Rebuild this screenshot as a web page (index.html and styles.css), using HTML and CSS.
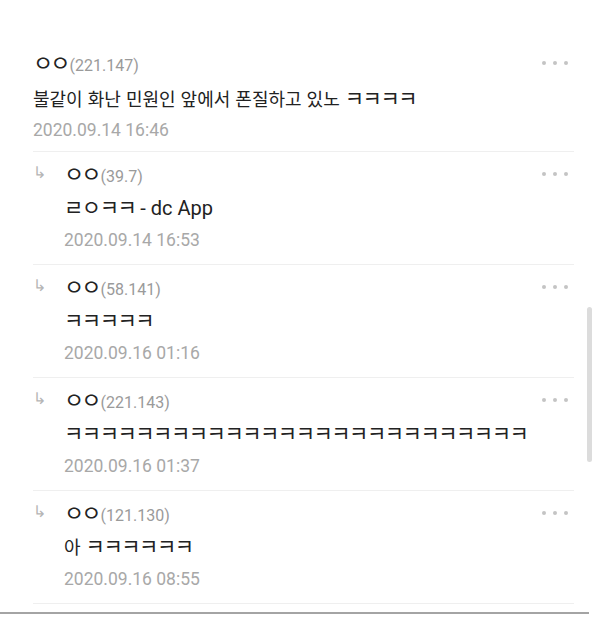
FILE: index.html
```html
<!DOCTYPE html>
<html lang="ko">
<head>
    <meta charset="UTF-8">
    <meta name="viewport" content="width=device-width, initial-scale=1.0">
    <title>댓글</title>
    <link rel="stylesheet" href="styles.css">
</head>
<body>

    <div class="comments">
        <ul class="comment-list">
            <li class="comment">
                <div class="comment-head">
                    <span class="nick">ㅇㅇ<span class="ip">(221.147)</span></span>
                    <span class="more"><i></i><i></i><i></i></span>
                </div>
                <p class="text">불같이 화난 민원인 앞에서 폰질하고 있노 <span class="jamo">ㅋㅋㅋㅋ</span></p>
                <span class="date">2020.09.14 16:46</span>
            </li>

            <li class="comment reply">
                <span class="arrow">↳</span>
                <div class="reply-body">
                    <div class="comment-head">
                        <span class="nick">ㅇㅇ<span class="ip">(39.7)</span></span>
                        <span class="more"><i></i><i></i><i></i></span>
                    </div>
                    <p class="text"><span class="jamo">ㄹㅇㅋㅋ</span> <span class="latin">- dc App</span></p>
                    <span class="date">2020.09.14 16:53</span>
                </div>
            </li>

            <li class="comment reply">
                <span class="arrow">↳</span>
                <div class="reply-body">
                    <div class="comment-head">
                        <span class="nick">ㅇㅇ<span class="ip">(58.141)</span></span>
                        <span class="more"><i></i><i></i><i></i></span>
                    </div>
                    <p class="text"><span class="jamo">ㅋㅋㅋㅋㅋ</span></p>
                    <span class="date">2020.09.16 01:16</span>
                </div>
            </li>

            <li class="comment reply">
                <span class="arrow">↳</span>
                <div class="reply-body">
                    <div class="comment-head">
                        <span class="nick">ㅇㅇ<span class="ip">(221.143)</span></span>
                        <span class="more"><i></i><i></i><i></i></span>
                    </div>
                    <p class="text"><span class="jamo">ㅋㅋㅋㅋㅋㅋㅋㅋㅋㅋㅋㅋㅋㅋㅋㅋㅋㅋㅋㅋㅋㅋㅋㅋㅋㅋ</span></p>
                    <span class="date">2020.09.16 01:37</span>
                </div>
            </li>

            <li class="comment reply">
                <span class="arrow">↳</span>
                <div class="reply-body">
                    <div class="comment-head">
                        <span class="nick">ㅇㅇ<span class="ip">(121.130)</span></span>
                        <span class="more"><i></i><i></i><i></i></span>
                    </div>
                    <p class="text">아 <span class="jamo">ㅋㅋㅋㅋㅋㅋ</span></p>
                    <span class="date">2020.09.16 08:55</span>
                </div>
            </li>
        </ul>

        <!-- scroll indicator -->
        <div class="scrollbar"></div>
    </div>

</body>
</html>
```

FILE: styles.css
```css
/* Global Styles */
body {
    margin: 0;
    padding: 0;
    background-color: #fff;
    font-family: Roboto, "Noto Sans CJK KR", sans-serif;
    color: #222;
}

.comments {
    position: relative;
    width: 589px;
    padding: 39px 0 8px;
    border-bottom: 2px solid #a4a4a4;
}

.comment-list {
    list-style: none;
    margin: 0 15px 0 33px;
    padding: 0;
}

/* Comment Row */
.comment {
    display: flex;
    flex-direction: column;
    padding: 10px 0 6px;
    border-bottom: 1px solid #efefef;
}

.comment:first-child .text {
    margin-top: 2px;
}

.comment.reply {
    flex-direction: row;
    padding: 8px 0 8px;
}

.reply .date {
    line-height: 32px;
}

.reply-body {
    flex: 1;
    display: flex;
    flex-direction: column;
}

.arrow {
    width: 31px;
    height: 26px;
    line-height: 26px;
    font-size: 16px;
    color: #b5b5b5;
}

.comment-head {
    display: flex;
    justify-content: space-between;
    align-items: center;
    height: 28px;
}

.nick {
    font-family: "Noto Sans CJK KR", sans-serif;
    font-size: 22px;
    font-weight: 400;
    letter-spacing: -3px;
    line-height: 28px;
    color: #222;
}

.ip {
    margin-left: 2px;
    font-family: Roboto, sans-serif;
    font-size: 16px;
    font-weight: 400;
    letter-spacing: 0;
    color: #9a9a9a;
}

.more {
    display: flex;
    gap: 7px;
    margin-right: 6px;
}

.more i {
    width: 4px;
    height: 4px;
    border-radius: 50%;
    background-color: #c4c4c4;
}

.text {
    margin: 0;
    height: 36px;
    line-height: 36px;
    font-family: "Noto Sans CJK KR", sans-serif;
    font-size: 18px;
    color: #222;
    white-space: nowrap;
}

.text .jamo {
    font-size: 21px;
    font-weight: 400;
    letter-spacing: -1.5px;
}

.text .latin {
    font-family: Roboto, sans-serif;
    font-size: 20px;
}

.date {
    line-height: 30px;
    font-size: 17.5px;
    color: #a8a8a8;
}

/* Scroll Indicator */
.scrollbar {
    position: absolute;
    top: 307px;
    left: 587px;
    width: 5px;
    height: 155px;
    border-radius: 3px;
    background-color: #dcdcdc;
}
```
